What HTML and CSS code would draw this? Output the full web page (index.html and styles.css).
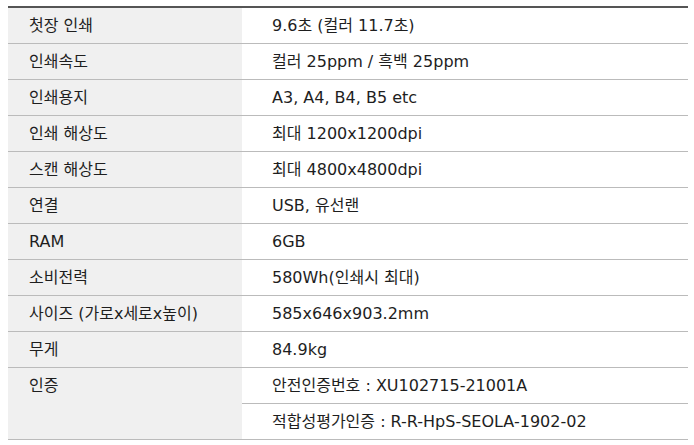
FILE: index.html
```html
<!DOCTYPE html>
<html lang="ko">
<head>
<meta charset="utf-8">
<link rel="stylesheet" href="styles.css">
</head>
<body>
<div class="wrap">
<table class="spec">
  <tbody>
    <tr><th>첫장 인쇄</th><td>9.6초 (컬러 11.7초)</td></tr>
    <tr><th>인쇄속도</th><td>컬러 25ppm / 흑백 25ppm</td></tr>
    <tr><th>인쇄용지</th><td>A3, A4, B4, B5 etc</td></tr>
    <tr><th>인쇄 해상도</th><td>최대 1200x1200dpi</td></tr>
    <tr><th>스캔 해상도</th><td>최대 4800x4800dpi</td></tr>
    <tr><th>연결</th><td>USB, 유선랜</td></tr>
    <tr><th>RAM</th><td>6GB</td></tr>
    <tr><th>소비전력</th><td>580Wh(인쇄시 최대)</td></tr>
    <tr><th>사이즈 (가로x세로x높이)</th><td>585x646x903.2mm</td></tr>
    <tr><th>무게</th><td>84.9kg</td></tr>
    <tr><th rowspan="2" class="top">인증</th><td>안전인증번호 : XU102715-21001A</td></tr>
    <tr><td>적합성평가인증 : R-R-HpS-SEOLA-1902-02</td></tr>
  </tbody>
</table>
</div>
</body>
</html>
```
FILE: styles.css
```css
html, body {
  margin: 0;
  padding: 0;
  background: #ffffff;
}
.wrap {
  padding: 6px 0 0 8px;
}
.spec {
  width: 680px;
  border-collapse: collapse;
  border-top: 2px solid #555555;
  font-family: "DejaVu Sans", "Noto Sans CJK KR", sans-serif;
  font-size: 16px;
  color: #1e1e1e;
}
.spec th,
.spec td {
  height: 35px;
  padding: 0;
  line-height: 35px;
  border-bottom: 1px solid #bbbbbb;
  text-align: left;
  font-weight: normal;
  white-space: nowrap;
}
.spec th {
  width: 234px;
  background: #f0f0f0;
  padding-left: 21px;
  box-sizing: border-box;
}
.spec td {
  padding-left: 30px;
}
.spec th.top {
  vertical-align: top;
}
```
